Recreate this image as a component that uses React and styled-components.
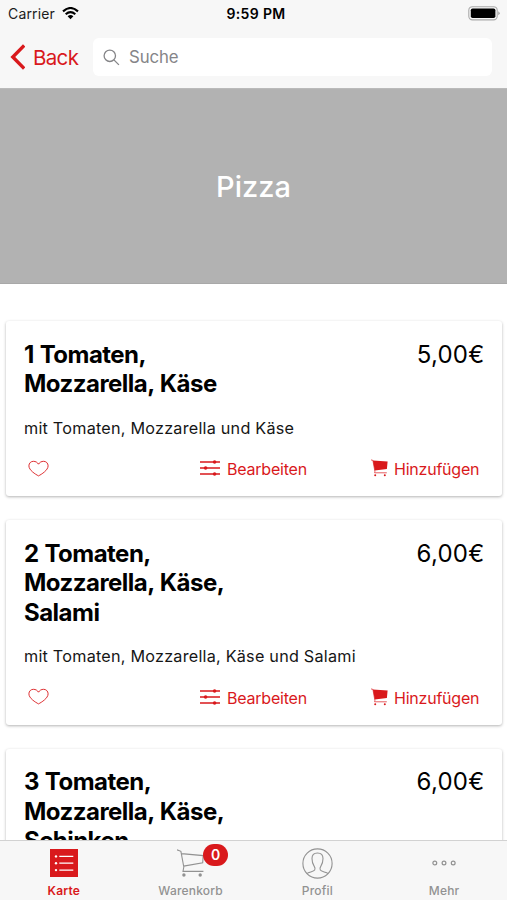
import React from "react";
import styled, { createGlobalStyle } from "styled-components";

const RED = "#d9191c";
const GREY = "#929292";

const GlobalStyle = createGlobalStyle`
  * { box-sizing: border-box; }
  html, body { margin: 0; padding: 0; background: #fff; }
  body { font-family: Inter, "Liberation Sans", sans-serif; color: #000; overflow: hidden; }
  svg { display: block; flex: none; }
`;

const Screen = styled.div`
  display: flex;
  flex-direction: column;
  width: 507px;
  height: 900px;
  overflow: hidden;
  background: #fff;
`;

const Header = styled.header`
  flex: none;
  height: 88px;
  background: #f7f7f7;
`;

const StatusBar = styled.div`
  display: grid;
  grid-template-columns: 1fr auto 1fr;
  align-items: center;
  height: 27px;
  padding: 0 7px 0 8px;
`;

const Carrier = styled.div`
  display: flex;
  align-items: center;
  gap: 7px;
  font-size: 14px;
  line-height: 20px;
  letter-spacing: 0.15px;
  color: #1c1c1c;
`;

const Clock = styled.div`
  padding-left: 4px;
  font-size: 14px;
  font-weight: 600;
  letter-spacing: 0.35px;
`;

const BatteryWrap = styled.div`
  justify-self: end;
`;

const NavBar = styled.nav`
  display: flex;
  align-items: center;
  height: 61px;
  padding: 0 15px 1px 10px;
`;

const BackButton = styled.div`
  display: flex;
  align-items: center;
  gap: 8px;
  width: 83px;
  color: ${RED};
  font-size: 20.5px;
  letter-spacing: -0.65px;
`;

const SearchField = styled.div`
  display: flex;
  flex: 1;
  align-items: center;
  gap: 9px;
  height: 38px;
  padding-left: 10px;
  border-radius: 6px;
  background: #fff;
  color: #858588;
  font-size: 16.8px;
  letter-spacing: -0.1px;
`;

const Hero = styled.section`
  display: flex;
  flex: none;
  align-items: center;
  justify-content: center;
  height: 196px;
  background: #b2b2b2;
  border-top: 1px solid #bababa;
  border-bottom: 1px solid #a8a8a8;
  color: #fff;
  font-size: 29px;
  font-weight: 500;
`;

const List = styled.main`
  display: flex;
  flex: 1;
  flex-direction: column;
  gap: 24px;
  min-height: 0;
  padding: 37px 5px 0 6px;
  overflow: hidden;
`;

const Card = styled.article`
  flex: none;
  padding: 18.5px 18px 17px;
  border-radius: 3px;
  background: #fff;
  box-shadow: 0 1px 3px rgba(0, 0, 0, 0.3);
`;

const CardTop = styled.div`
  display: flex;
  justify-content: space-between;
`;

const Title = styled.h2`
  width: 240px;
  margin: 0;
  font-size: 24px;
  font-weight: 700;
  line-height: 29.5px;
  letter-spacing: -0.52px;
  word-spacing: 0.7px;
  white-space: pre-line;
`;

const Price = styled.div`
  font-size: 24px;
  line-height: 29.5px;
  letter-spacing: 0.25px;
  margin-right: -0.5px;
`;

const Description = styled.p`
  margin: 19px 0 0;
  font-size: 16.2px;
  line-height: 20px;
  letter-spacing: 0.23px;
  color: #161616;
`;

const Actions = styled.div`
  display: grid;
  grid-template-columns: 176px 171px 1fr;
  align-items: center;
  height: 22px;
  margin-top: 19.5px;
  color: ${RED};
  font-size: 16px;
  letter-spacing: -0.22px;
`;

const Action = styled.div`
  display: flex;
  align-items: center;
  gap: ${(p) => p.$gap || "0"};
  padding-left: ${(p) => p.$inset || "0"};
  white-space: nowrap;
`;

const ActionLabel = styled.span`
  padding-top: 2px;
`;

const TabBar = styled.footer`
  display: grid;
  flex: none;
  grid-template-columns: repeat(4, 1fr);
  height: 60px;
  border-top: 1px solid #d2d2d2;
  background: #f7f7f7;
`;

const Tab = styled.div`
  display: flex;
  flex-direction: column;
  align-items: center;
  padding: 7px 0 0 1px;
  color: ${(p) => (p.$active ? RED : GREY)};
  font-size: 12px;
  font-weight: ${(p) => (p.$active ? 600 : 500)};
  line-height: 16px;
  letter-spacing: 0.2px;
`;

const TabIcon = styled.div`
  position: relative;
  display: flex;
  align-items: center;
  justify-content: center;
  height: 30px;
  margin-bottom: 5px;
`;

const Badge = styled.span`
  position: absolute;
  top: -4px;
  left: 26px;
  width: 25px;
  height: 22px;
  border-radius: 11px;
  background: ${RED};
  color: #fff;
  font-size: 14px;
  font-weight: 600;
  line-height: 22px;
  letter-spacing: 0;
  text-align: center;
`;

const WifiIcon = () => (
  <svg width="17" height="13" viewBox="0 0 17 13" fill="none" stroke="#000" strokeWidth="2.1">
    <path d="M1 4.4Q8.5-2.4 16 4.4M3.7 7.3Q8.5 3 13.3 7.3" />
    <path d="M8.5 12.2 5.6 9.3Q8.5 6.9 11.4 9.3Z" fill="#000" stroke="none" />
  </svg>
);

const BatteryIcon = () => (
  <svg width="32" height="15" viewBox="0 0 32 15">
    <rect x=".8" y=".7" width="28.4" height="13.2" rx="3.6" fill="#f7f7f7" stroke="#aaa" strokeWidth="1.1" />
    <rect x="2.8" y="2.5" width="24.6" height="9.6" rx="1.8" />
    <path d="M30.3 5.3Q33 7.3 30.3 9.3Z" fill="#999" />
  </svg>
);

const BackIcon = () => (
  <svg width="15" height="26" viewBox="0 0 15 26" fill="none" stroke={RED} strokeWidth="3.4">
    <path d="M14.2 1.4 2.8 13l11.4 11.6" />
  </svg>
);

const SearchIcon = () => (
  <svg width="17" height="17" viewBox="0 0 17 17" fill="none" stroke="#858588" strokeWidth="1.3">
    <circle cx="6.8" cy="6.8" r="5.7" />
    <path d="m10.9 10.9 5 5" />
  </svg>
);

const HeartIcon = () => (
  <svg width="21" height="17" viewBox="0 0 21 17" fill="none" stroke={RED} strokeWidth=".9">
    <path d="M10.5 15.9C7.4 14.2.9 10.3.9 5.8.9 3.2 2.9 1.3 5.4 1.3c2.2 0 4.1 1.1 5.1 2.9 1-1.8 2.9-2.9 5.1-2.9 2.5 0 4.5 1.9 4.5 4.5 0 4.5-6.5 8.4-9.6 10.1Z" />
  </svg>
);

const SlidersIcon = () => (
  <svg width="20" height="16" viewBox="0 0 20 16" fill={RED} stroke={RED} strokeWidth="1.4">
    <path d="M0 2h20M0 8h20M0 14h20" />
    <g stroke="none">
      <circle cx="14.6" cy="2" r="1.8" />
      <circle cx="5.6" cy="8" r="1.8" />
      <circle cx="14.6" cy="14" r="1.8" />
    </g>
  </svg>
);

const FilledCartIcon = () => (
  <svg width="17" height="18" viewBox="0 0 17 18" fill={RED}>
    <path d="M1.9 1.6 16.6 2.4 15.9 10 3.8 11.4Z" />
    <path d="M0 .9 1.9 1.4 3.9 12.3 3.6 13.8H15.8" fill="none" stroke={RED} strokeWidth=".7" />
    <circle cx="4.2" cy="16.2" r="1" />
    <circle cx="13.8" cy="16.2" r="1" />
  </svg>
);

const MenuIcon = () => (
  <svg width="28" height="28" viewBox="0 0 28 28">
    <rect width="28" height="28" fill={RED} />
    <g fill="#fff">
      <circle cx="6" cy="7.4" r="1.2" />
      <circle cx="6" cy="14.2" r="1.2" />
      <circle cx="6" cy="21.1" r="1.2" />
    </g>
    <path d="M9.3 7.4h14M9.3 14.2h14M9.3 21.1h14" stroke="#fff" strokeWidth="1.2" />
  </svg>
);

const CartIcon = () => (
  <svg width="27" height="28" viewBox="0 0 27 28" fill="none" stroke={GREY} strokeWidth="1.1">
    <path d="M0 .8 3.9 2.3 6.8 18 6 22.4H26.4M4.4 4.6 26.2 6.6 25.7 13.8 6.6 17.1" />
    <g fill={GREY} stroke="none">
      <circle cx="6.9" cy="26" r="1.7" />
      <circle cx="23.2" cy="26" r="1.7" />
    </g>
  </svg>
);

const ProfileIcon = () => (
  <svg width="31" height="31" viewBox="0 0 31 31" fill="none" stroke={GREY} strokeWidth="1.1">
    <circle cx="15.5" cy="15.5" r="14.6" />
    <path d="M4.8 25.6C7.2 24 11.8 23.7 12.7 22.1 13.2 21.2 13.1 19.5 12 17.9 10.5 15.7 10 13.6 10 10.6 10 7.1 12.2 5 15.5 5S21 7.1 21 10.6C21 13.6 20.5 15.7 19 17.9 17.9 19.5 17.8 21.2 18.3 22.1 19.2 23.7 23.8 24 26.2 25.6" />
  </svg>
);

const MoreIcon = () => (
  <svg width="24" height="6" viewBox="0 0 24 6" fill="none" stroke={GREY} strokeWidth="1.2">
    <circle cx="2.8" cy="3" r="1.9" />
    <circle cx="12" cy="3" r="1.9" />
    <circle cx="21.2" cy="3" r="1.9" />
  </svg>
);

const items = [
  { title: "1 Tomaten,\nMozzarella, Käse", price: "5,00€", description: "mit Tomaten, Mozzarella und Käse" },
  { title: "2 Tomaten,\nMozzarella, Käse,\nSalami", price: "6,00€", description: "mit Tomaten, Mozzarella, Käse und Salami" },
  { title: "3 Tomaten,\nMozzarella, Käse,\nSchinken", price: "6,00€" },
];

const MenuCard = ({ title, price, description }) => (
  <Card>
    <CardTop>
      <Title>{title}</Title>
      <Price>{price}</Price>
    </CardTop>
    {description && (
      <>
        <Description>{description}</Description>
        <Actions>
          <Action $inset="4px"><HeartIcon /></Action>
          <Action $gap="7px"><SlidersIcon /><ActionLabel>Bearbeiten</ActionLabel></Action>
          <Action $gap="6px"><FilledCartIcon /><ActionLabel>Hinzufügen</ActionLabel></Action>
        </Actions>
      </>
    )}
  </Card>
);

export default function App() {
  return (
    <Screen>
      <GlobalStyle />
      <Header>
        <StatusBar>
          <Carrier>Carrier<WifiIcon /></Carrier>
          <Clock>9:59 PM</Clock>
          <BatteryWrap><BatteryIcon /></BatteryWrap>
        </StatusBar>
        <NavBar>
          <BackButton><BackIcon />Back</BackButton>
          <SearchField><SearchIcon />Suche</SearchField>
        </NavBar>
      </Header>
      <Hero>Pizza</Hero>
      <List>
        {items.map((item) => <MenuCard key={item.title} {...item} />)}
      </List>
      <TabBar>
        <Tab $active><TabIcon><MenuIcon /></TabIcon>Karte</Tab>
        <Tab><TabIcon><CartIcon /><Badge>0</Badge></TabIcon>Warenkorb</Tab>
        <Tab><TabIcon><ProfileIcon /></TabIcon>Profil</Tab>
        <Tab><TabIcon><MoreIcon /></TabIcon>Mehr</Tab>
      </TabBar>
    </Screen>
  );
}
